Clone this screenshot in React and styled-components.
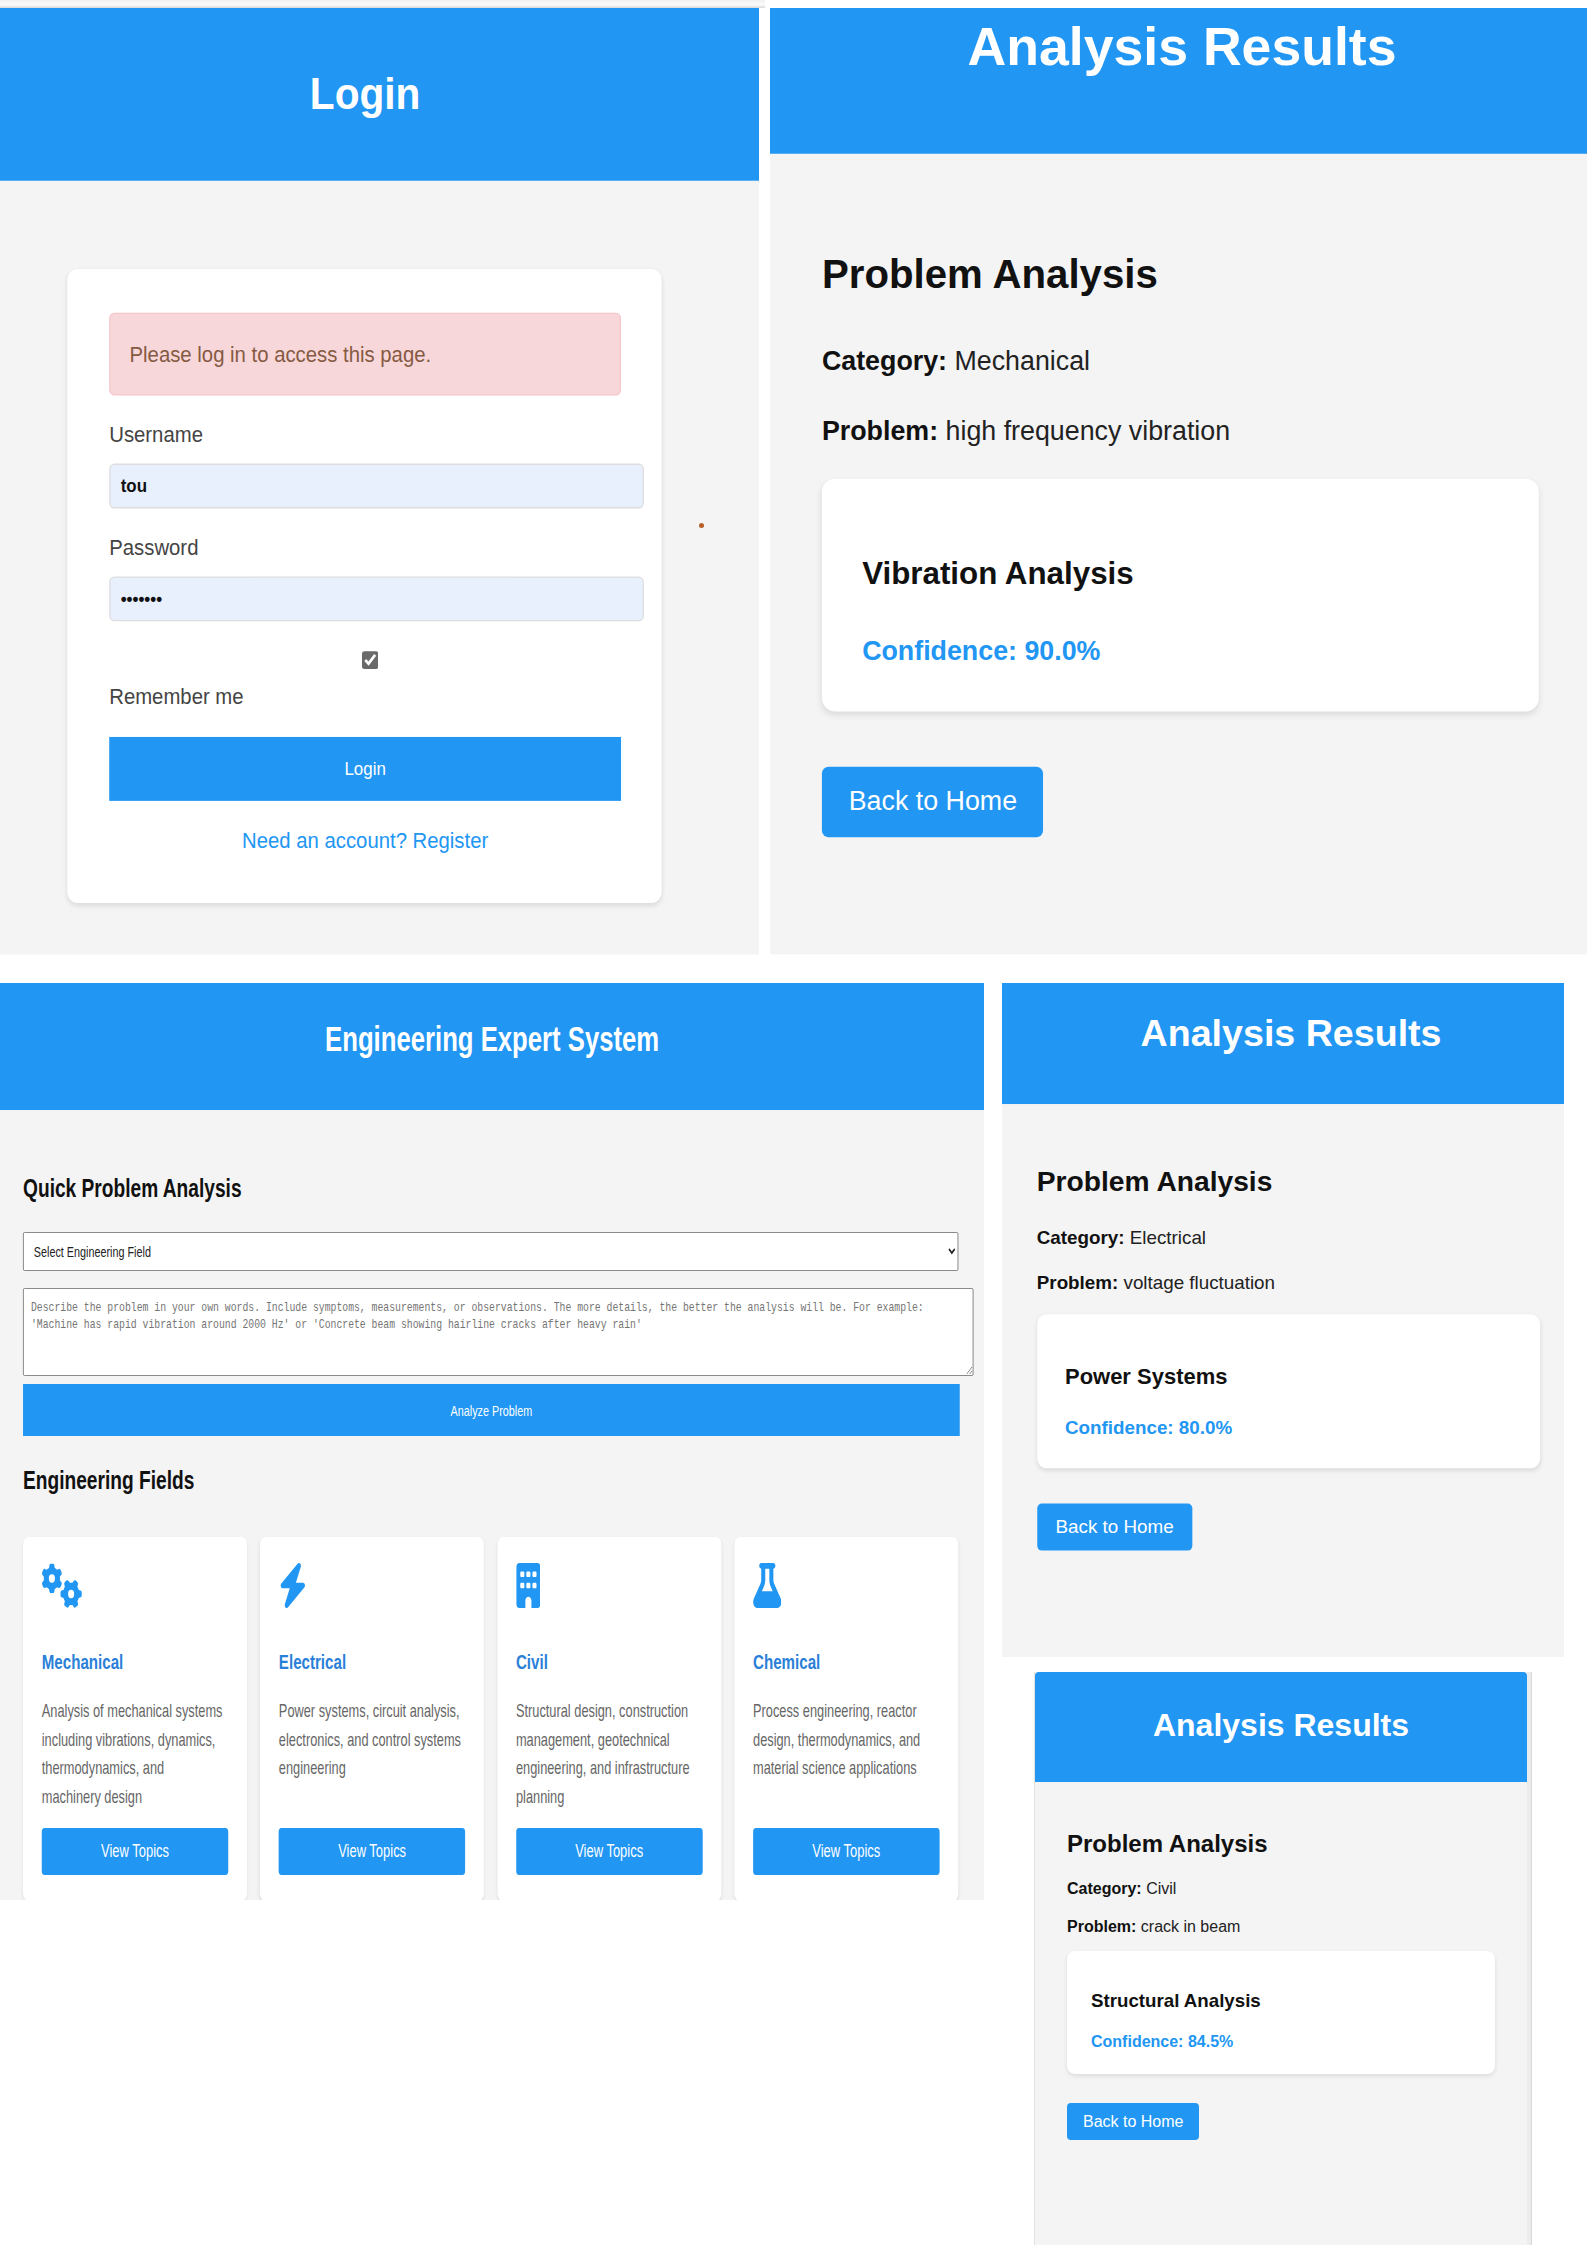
import React from "react"
import styled, { createGlobalStyle } from "styled-components"
import { FaGears, FaBolt, FaBuilding, FaFlask } from "react-icons/fa6"

const blue = "#2196f3"

// vertical spacing in a shot is looser than its text, --k carries the difference
const v = (n) => `calc(var(--k) * ${n}px)`

const Global = createGlobalStyle`
  html, body {
    margin: 0;
    background: #fff;
    font-family: "Liberation Sans", Arial, sans-serif;
  }
  * {
    font-family: inherit;
  }
`

const Page = styled.div`
  width: 1587px;
  height: 2245px;
  overflow: hidden;
  display: flex;
  flex-direction: column;
`
const TopLine = styled.div`
  width: 765px;
  height: 8px;
  background: linear-gradient(#f1f1f1 0, #fbfbfb 60%, #dcdcdc 95%);
`
const TopRow = styled.div`
  display: flex;
  gap: 11px;
  height: 947px;
`
const BottomRow = styled.div`
  display: flex;
  gap: 18px;
  margin-top: 28px;
`
const SideColumn = styled.div`
  display: flex;
  flex-direction: column;
  gap: 15px;
`

// each shot in the collage is a normal page scaled a bit differently
const Shot = styled.section`
  position: relative;
  flex: none;
  width: ${(p) => p.$w}px;
  height: ${(p) => p.$h}px;
  margin-left: ${(p) => p.$left || 0}px;
  overflow: hidden;
  ${(p) => p.$edge && "border-left: 1px solid #e2e2e2; border-right: 4px solid #ececec; box-shadow: 1px 0 0 #d8d8d8;"}
`
const Stretch = styled.div`
  --k: ${(p) => p.$k || 1};
  width: ${(p) => p.$w}px;
  height: ${(p) => p.$h}px;
  background: #f4f4f4;
  color: #333;
  transform: scale(${(p) => p.$sx}, ${(p) => p.$sy});
  transform-origin: 0 0;
`
const Header = styled.header`
  height: ${(p) => p.$h}px;
  padding: ${(p) => p.$top}px ${(p) => p.$right || 0}px 0 0;
  box-sizing: border-box;
  background: ${blue};
  color: #fff;
  text-align: center;
  border-radius: ${(p) => (p.$round ? "4px 4px 0 0" : "0")};
`
const Title = styled.h1`
  margin: 0;
  font-size: ${(p) => p.$size || 32}px;
  line-height: 37px;
  font-weight: 700;
`

/* login */
const LoginCard = styled.div`
  width: 468px;
  height: ${v(408)};
  margin: ${v(57.4)} 0 0 53px;
  padding: ${v(28)} 32px 0 33px;
  box-sizing: border-box;
  background: #fff;
  border-radius: 8px;
  box-shadow: 0 2px 4px rgba(0, 0, 0, 0.1);
`
const Alert = styled.div`
  height: ${v(53)};
  padding-left: 15px;
  line-height: ${v(52)};
  box-sizing: border-box;
  background: #f8d7da;
  border: 1px solid #f5c6cb;
  border-radius: 4px;
  color: #855a42;
  font-size: 16px;
`
const FieldLabel = styled.label`
  display: block;
  margin-top: ${(p) => v(p.$top)};
  color: #444;
  font-size: 16px;
  line-height: ${v(18.4)};
`
const TextInput = styled.input`
  display: block;
  width: 403px;
  height: ${v(27)};
  margin-top: ${v(9)};
  padding: 0 8px;
  background: #e8f0fe;
  border: 1px solid #ddd;
  border-radius: 4px;
  color: #111;
  font-size: 13.33px;
  font-weight: 700;
  outline: none;
`
const CheckRow = styled.div`
  width: 410px;
  margin-top: ${v(19)};
  height: ${v(13)};
  display: flex;
  justify-content: center;
  align-items: center;
`
const Check = styled.input`
  margin: 0;
  width: 13px;
  height: 13px;
  accent-color: #6a6a6a;
`
const WideButton = styled.button`
  display: block;
  width: 100%;
  height: ${(p) => v(p.$h)};
  margin-top: ${(p) => v(p.$top)};
  border: none;
  background: ${blue};
  color: #fff;
  font-size: ${(p) => p.$size}px;
`
const RegisterLink = styled.a`
  display: block;
  margin-top: ${v(17.2)};
  color: ${blue};
  font-size: 16px;
  line-height: ${v(18.4)};
  text-align: center;
`
const StrayDot = styled.span`
  position: absolute;
  left: 699px;
  top: 515px;
  width: 5px;
  height: 5px;
  border-radius: 50%;
  background: #b5602a;
`

/* results */
const Main = styled.div`
  padding: ${v(32)} ${(p) => p.$pad}px;
`
const Heading = styled.h2`
  margin: ${(p) => v(p.$top)} 0 ${(p) => v(p.$gap)};
  color: #111;
  font-size: 24px;
  line-height: ${v(28)};
`
const Line = styled.p`
  margin: 0 0 ${(p) => v(p.$gap)};
  color: #222;
  font-size: 16px;
  line-height: ${v(18.4)};
  b {
    color: #111;
  }
`
const ResultCard = styled.div`
  width: 428px;
  height: ${v(123)};
  margin-top: ${(p) => v(p.$top)};
  padding: ${(p) => v(p.$inset)} 24px 0;
  box-sizing: border-box;
  background: #fff;
  border-radius: 8px;
  box-shadow: 0 2px 4px rgba(0, 0, 0, 0.1);
`
const CardTitle = styled.h3`
  margin: 0 0 ${v(21)};
  color: #111;
  font-size: 18.72px;
  line-height: ${v(21.5)};
`
const Confidence = styled.div`
  color: ${blue};
  font-size: 16px;
  font-weight: 700;
  line-height: ${v(18.4)};
`
const HomeButton = styled.a`
  display: inline-block;
  margin-top: ${v(29)};
  padding: ${v(9.3)} 16px;
  background: ${blue};
  border-radius: 4px;
  color: #fff;
  font-size: 16px;
  line-height: ${v(18.4)};
`

/* engineering home */
const Home = styled.div`
  padding: 63px 34px 0 32px;
`
const SectionTitle = styled.h2`
  margin: ${(p) => p.$top || 0}px 0 0;
  color: #111;
  font-size: 26.6px;
  line-height: 30px;
`
const FieldSelect = styled.select`
  display: block;
  width: 1299px;
  height: 39px;
  margin-top: 29px;
  padding-left: 10px;
  background: #fff;
  border: 1px solid #777;
  border-radius: 2px;
  color: #222;
  font-size: 15px;
`
const ProblemBox = styled.textarea`
  display: block;
  width: 1298px;
  height: 65px;
  margin-top: 17px;
  padding: 11px 10px 10px;
  background: #fff;
  border: 1px solid #777;
  border-radius: 2px;
  font-family: "Liberation Mono", monospace;
  font-size: 13.6px;
  line-height: 16.7px;
  &::placeholder {
    color: #757575;
  }
`
const Fields = styled.div`
  display: grid;
  grid-template-columns: repeat(4, 311.1px);
  gap: 18.2px;
  margin-top: 42px;
`
const FieldCard = styled.article`
  display: flex;
  flex-direction: column;
  height: 364px;
  padding: 26px 26px 0;
  box-sizing: border-box;
  background: #fff;
  border-radius: 8px;
  box-shadow: 0 2px 4px rgba(0, 0, 0, 0.08);
`
const FieldIcon = styled.div`
  height: 45px;
  color: ${blue};
  svg {
    display: block;
    width: ${(p) => p.$w}px;
    height: 45px;
  }
`
const FieldName = styled.h3`
  margin: 42px 0 23px;
  color: #2a80d8;
  font-size: 21px;
  line-height: 24px;
`
const FieldText = styled.p`
  margin: 0;
  height: 115px;
  padding-right: 3px;
  color: #666;
  font-size: 17.8px;
  line-height: 28.5px;
`
const TopicsButton = styled.a`
  display: block;
  height: 47px;
  margin-top: 16px;
  background: ${blue};
  border-radius: 4px;
  color: #fff;
  font-size: 18px;
  line-height: 47px;
  text-align: center;
`

const fields = [
  { name: "Mechanical", Icon: FaGears, iconW: 56.25, text: "Analysis of mechanical systems including vibrations, dynamics, thermodynamics, and machinery design" },
  { name: "Electrical", Icon: FaBolt, iconW: 39.4, text: "Power systems, circuit analysis, electronics, and control systems engineering" },
  { name: "Civil", Icon: FaBuilding, iconW: 33.75, text: "Structural design, construction management, geotechnical engineering, and infrastructure planning" },
  { name: "Chemical", Icon: FaFlask, iconW: 39.4, text: "Process engineering, reactor design, thermodynamics, and material science applications" },
]

const LoginShot = () => (
  <Shot $w={759} $h={947}>
    <Stretch $w={598} $h={696} $sx={1.27} $sy={1.36} $k={1.14}>
      <Header $h={127} $top={45} $right={23}>
        <Title>Login</Title>
      </Header>
      <LoginCard>
        <Alert>Please log in to access this page.</Alert>
        <FieldLabel $top={16.8}>Username</FieldLabel>
        <TextInput type="text" defaultValue="tou" />
        <FieldLabel $top={16.6}>Password</FieldLabel>
        <TextInput type="password" defaultValue="1234567" />
        <CheckRow>
          <Check type="checkbox" defaultChecked />
        </CheckRow>
        <FieldLabel $top={8.4}>Remember me</FieldLabel>
        <WideButton $h={41} $top={16.4} $size={13.33}>Login</WideButton>
        <RegisterLink>Need an account? Register</RegisterLink>
      </LoginCard>
    </Stretch>
    <StrayDot />
  </Shot>
)

const ResultsShot = ({ w, h, left, edge, scale, k, headerH, titleTop, pad, headingTop, headingGap, lineGap, cardTop, inset, category, problem, analysis, confidence }) => (
  <Shot $w={w} $h={h} $left={left} $edge={edge}>
    <Stretch $w={492} $h={h / scale} $sx={scale} $sy={scale} $k={k}>
      <Header $h={headerH} $top={titleTop} $round={edge}>
        <Title>Analysis Results</Title>
      </Header>
      <Main $pad={pad}>
        <Heading $top={headingTop} $gap={headingGap}>Problem Analysis</Heading>
        <Line $gap={lineGap}><b>Category:</b> {category}</Line>
        <Line $gap={lineGap}><b>Problem:</b> {problem}</Line>
        <ResultCard $top={cardTop} $inset={inset}>
          <CardTitle>{analysis}</CardTitle>
          <Confidence>Confidence: {confidence}%</Confidence>
        </ResultCard>
        <HomeButton>Back to Home</HomeButton>
      </Main>
    </Stretch>
  </Shot>
)

const HomeShot = () => (
  <Shot $w={984} $h={917}>
    <Stretch $w={1367} $h={917} $sx={0.72} $sy={1}>
      <Header $h={127} $top={38}>
        <Title $size={35.7}>Engineering Expert System</Title>
      </Header>
      <Home>
        <SectionTitle>Quick Problem Analysis</SectionTitle>
        <FieldSelect defaultValue="">
          <option value="">Select Engineering Field</option>
        </FieldSelect>
        <ProblemBox placeholder="Describe the problem in your own words. Include symptoms, measurements, or observations. The more details, the better the analysis will be. For example: 'Machine has rapid vibration around 2000 Hz' or 'Concrete beam showing hairline cracks after heavy rain'" />
        <WideButton $h={52} $top={8} $size={15}>Analyze Problem</WideButton>
        <SectionTitle $top={29}>Engineering Fields</SectionTitle>
        <Fields>
          {fields.map(({ name, Icon, iconW, text }) => (
            <FieldCard key={name}>
              <FieldIcon $w={iconW}><Icon /></FieldIcon>
              <FieldName>{name}</FieldName>
              <FieldText>{text}</FieldText>
              <TopicsButton>View Topics</TopicsButton>
            </FieldCard>
          ))}
        </Fields>
      </Home>
    </Stretch>
  </Shot>
)

const App = () => (
  <Page>
    <Global />
    <TopLine />
    <TopRow>
      <LoginShot />
      <ResultsShot
        w={817} h={947} scale={1.675} k={1.134} headerH={87} titleTop={5.4} pad={31}
        headingTop={17.4} headingGap={23.4} lineGap={18.6} cardTop={-4} inset={39.7}
        category="Mechanical" problem="high frequency vibration"
        analysis="Vibration Analysis" confidence="90.0"
      />
    </TopRow>
    <BottomRow>
      <HomeShot />
      <SideColumn>
        <ResultsShot
          w={562} h={674} scale={1.175} k={1.064} headerH={102.5} titleTop={25} pad={29.6}
          headingTop={16} headingGap={22} lineGap={17.7} cardTop={-1.7} inset={39.9}
          category="Electrical" problem="voltage fluctuation"
          analysis="Power Systems" confidence="80.0"
        />
        <ResultsShot
          w={492} h={573} left={32} edge scale={1} k={1} headerH={110} titleTop={35} pad={32}
          headingTop={16} headingGap={22} lineGap={20} cardTop={-5.4} inset={39}
          category="Civil" problem="crack in beam"
          analysis="Structural Analysis" confidence="84.5"
        />
      </SideColumn>
    </BottomRow>
  </Page>
)

export default App
